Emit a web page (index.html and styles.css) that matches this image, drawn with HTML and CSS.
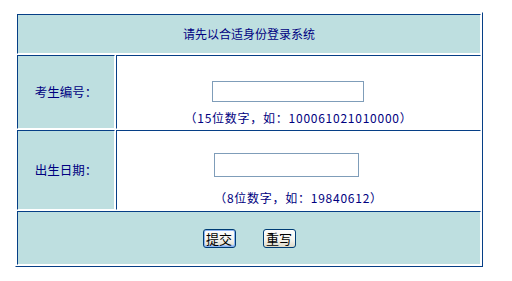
FILE: index.html
```html
<!DOCTYPE html>
<html lang="zh-CN">
<head>
    <meta charset="UTF-8">
    <title>考生登录</title>
    <link rel="stylesheet" href="styles.css">
</head>
<body>
    <form action="#" method="post">
    <table class="login">
        <tr>
            <td colspan="2" class="title">请先以合适身份登录系统</td>
        </tr>
        <tr class="row-id">
            <td class="label">考生编号：</td>
            <td class="field">
                <div class="entry"><input type="text" name="ksbh" class="text text-id"></div>
                <div class="hint">（15位数字，如：100061021010000）</div>
            </td>
        </tr>
        <tr class="row-birth">
            <td class="label">出生日期：</td>
            <td class="field">
                <div class="entry entry-birth"><input type="text" name="csrq" class="text text-birth"></div>
                <div class="hint">（8位数字，如：19840612）</div>
            </td>
        </tr>
        <tr class="row-actions">
            <td colspan="2" class="actions">
                <div class="buttons">
                    <button type="submit" class="btn btn-default">提交</button>
                    <button type="reset" class="btn">重写</button>
                </div>
            </td>
        </tr>
    </table>
    </form>
</body>
</html>
```

FILE: styles.css
```css
body {
    margin: 0;
    background: #fff;
    font-family: "Noto Sans CJK SC", "DejaVu Sans", sans-serif;
    font-size: 12px;
    color: #000080;
}

form {
    margin: 0;
}

.login {
    width: 468px;
    margin: 12px 0 0 15px;
    border-collapse: separate;
    border-spacing: 1px;
    border: 1px solid;
    border-color: #fff #063f86 #063f86 #fff;
}

.login td {
    box-sizing: border-box;
    padding: 0;
    background: #bedfe0;
    border: 1px solid;
    border-color: #063f86 #fff #fff #063f86;
    line-height: 14px;
}

.title {
    height: 40px;
    text-align: center;
    vertical-align: middle;
}

.label {
    width: 98px;
    text-align: center;
    vertical-align: middle;
    font-size: 12.5px;
}

.login td.field {
    width: 365px;
    background: #fff;
    vertical-align: top;
    text-align: center;
}

.row-id td {
    height: 74px;
}

.row-birth td {
    height: 80px;
}

.row-id .field {
    padding-top: 25px;
}

.row-birth .field {
    padding-top: 22px;
}

.entry {
    display: flex;
    justify-content: center;
    padding-right: 22px;
}

.entry-birth {
    padding-right: 24px;
}

.text {
    box-sizing: border-box;
    margin: 0;
    padding: 1px 2px;
    border: 1px solid #7f9db9;
    background: #fff;
    font: inherit;
}

.text-id {
    width: 152px;
    height: 21px;
}

.text-birth {
    width: 145px;
    height: 24px;
}

.hint {
    letter-spacing: 0.75px;
    white-space: nowrap;
}

.row-id .hint {
    margin-top: 9px;
}

.row-birth .hint {
    margin-top: 14px;
}

.actions {
    height: 54px;
    vertical-align: middle;
}

.buttons {
    display: flex;
    justify-content: center;
    gap: 27px;
}

.btn {
    box-sizing: border-box;
    width: 33px;
    height: 19px;
    padding: 0;
    border: 1px solid #003c74;
    border-radius: 3px;
    background: linear-gradient(#fefefe, #f4f3ee 60%, #dcd8c8);
    color: #000;
    font: inherit;
    font-size: 13px;
    line-height: 15px;
}

.btn-default {
    box-shadow: inset 0 0 0 1px #8cb4f2, inset 0 -1px 0 1px #a9c6f4;
}
```
